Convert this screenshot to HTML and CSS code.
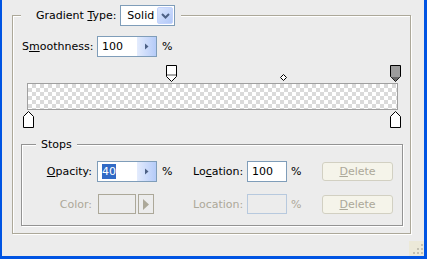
FILE: index.html
```html
<!DOCTYPE html>
<html lang="en">
  <head>
    <meta charset="UTF-8" />
    <title>Gradient Editor</title>
    <link rel="stylesheet" href="styles.css">
  </head>
  <body>
    <div class="window">

      <fieldset class="group gradient-group">
        <legend class="group-title">
          <span>Gradient <u>T</u>ype:</span>
          <span class="select">
            <span class="select-value">Solid</span>
            <span class="select-btn">
              <svg width="9" height="6" viewBox="0 0 9 6"><path d="M1 1 L4.5 4.5 L8 1" fill="none" stroke="#4d6185" stroke-width="2"/></svg>
            </span>
          </span>
        </legend>

        <!-- Smoothness -->
        <div class="smooth-row">
          <span class="label">S<u>m</u>oothness:</span>
          <span class="spin">
            <span class="spin-value">100</span>
            <span class="spin-btn">
              <svg width="4" height="7" viewBox="0 0 4 7"><path d="M0 0.5 L3.5 3.5 L0 6.5 Z" fill="#4d6185"/></svg>
            </span>
          </span>
          <span class="unit">%</span>
        </div>

        <!-- Gradient bar with stops -->
        <div class="gradient-editor">
          <span class="stop stop-top" style="--loc: 0.39">
            <svg width="11" height="17" viewBox="0 0 11 17"><path d="M0.5 0.5 H10.5 V11.5 L5.5 16.5 L0.5 11.5 Z" fill="#fff" stroke="#000"/><rect x="1" y="9" width="9" height="2" fill="#a8a8a8"/></svg>
          </span>
          <span class="stop stop-mid" style="--loc: 0.695">
            <svg width="7" height="7" viewBox="0 0 7 7"><path d="M3.5 0.5 L6.5 3.5 L3.5 6.5 L0.5 3.5 Z" fill="#fff" stroke="#000"/></svg>
          </span>
          <span class="stop stop-top" style="--loc: 1">
            <svg width="11" height="17" viewBox="0 0 11 17"><path d="M0.5 0.5 H10.5 V11.5 L5.5 16.5 L0.5 11.5 Z" fill="#9c9c9c" stroke="#000"/><path d="M1 12 H10 L5.5 16 Z" fill="#666"/></svg>
          </span>

          <div class="gradient-bar"></div>

          <span class="stop stop-bottom" style="--loc: 0">
            <svg width="11" height="17" viewBox="0 0 11 17"><path d="M5.5 0.5 L10.5 5.5 V16.5 H0.5 V5.5 Z" fill="#fff" stroke="#000"/></svg>
          </span>
          <span class="stop stop-bottom" style="--loc: 1">
            <svg width="11" height="17" viewBox="0 0 11 17"><path d="M5.5 0.5 L10.5 5.5 V16.5 H0.5 V5.5 Z" fill="#fff" stroke="#000"/></svg>
          </span>
        </div>

        <!-- Stops -->
        <fieldset class="group stops-group">
          <legend>Stops</legend>
          <div class="stops-grid">
            <span class="label"><u>O</u>pacity:</span>
            <span class="spin">
              <span class="spin-value"><span class="selected">40</span></span>
              <span class="spin-btn">
                <svg width="4" height="7" viewBox="0 0 4 7"><path d="M0 0.5 L3.5 3.5 L0 6.5 Z" fill="#4d6185"/></svg>
              </span>
            </span>
            <span class="unit">%</span>
            <span>Lo<u>c</u>ation:</span>
            <span class="input">100</span>
            <span class="unit-sm">%</span>
            <span class="button disabled"><u>D</u>elete</span>

            <span class="label disabled">Color:</span>
            <span class="color-pick">
              <span class="swatch"></span>
              <span class="swatch-btn">
                <svg width="6" height="11" viewBox="0 0 6 11"><path d="M0 0 L6 5.5 L0 11 Z" fill="#aca899"/></svg>
              </span>
            </span>
            <span class="unit"></span>
            <span class="disabled">Location:</span>
            <span class="input input-off"></span>
            <span class="unit-sm disabled">%</span>
            <span class="button disabled"><u>D</u>elete</span>
          </div>
        </fieldset>
      </fieldset>

      <div class="status-bar">
        <span class="grip">
          <svg width="15" height="15" viewBox="0 0 15 15">
            <rect x="12" y="3" width="2" height="2" fill="#c4c1b2"/>
            <rect x="8" y="7" width="2" height="2" fill="#c4c1b2"/>
            <rect x="12" y="7" width="2" height="2" fill="#c4c1b2"/>
            <rect x="4" y="11" width="2" height="2" fill="#c4c1b2"/>
            <rect x="8" y="11" width="2" height="2" fill="#c4c1b2"/>
            <rect x="12" y="11" width="2" height="2" fill="#c4c1b2"/>
          </svg>
        </span>
      </div>

    </div>
  </body>
</html>
```

FILE: styles.css
```css
:root {
  --bg: #ececec;
  --xp-blue: #0054e3;
  --field-border: #7f9db9;
  --disabled: #aca899;
}

* {
  box-sizing: border-box;
}

body {
  margin: 0;
  background: var(--bg);
  font-family: "DejaVu Sans", sans-serif;
  font-size: 11px;
  color: #000;
}

u {
  text-decoration: underline;
}

.window {
  width: 427px;
  height: 259px;
  border-left: 2px solid var(--xp-blue);
  border-right: 3px solid var(--xp-blue);
  border-bottom: 3px solid var(--xp-blue);
  padding: 5px 0 0 10px;
  display: flex;
  flex-direction: column;
}

/* group boxes */
.group {
  margin: 0;
  padding: 0;
  min-width: 0;
  border: 1px solid #aca899;
  box-shadow: inset 1px 1px 0 #fff, 1px 1px 0 #fff;
}

.group > legend {
  background: var(--bg);
}

.gradient-group {
  width: 399px;
}

.group-title {
  margin-left: 8px;
  padding: 0 6px 0 15px;
  display: flex;
  align-items: center;
  gap: 4px;
}

.select {
  width: 55px;
  height: 21px;
  border: 1px solid var(--field-border);
  background: #fff;
  display: flex;
  align-items: center;
}

.select-value {
  flex: 1;
  padding-left: 6px;
}

.select-btn {
  width: 16px;
  height: 17px;
  margin-right: 1px;
  border: 1px solid #c3d3fd;
  border-radius: 2px;
  background: linear-gradient(135deg, #dbe6fd, #b2c8f8);
  display: flex;
  align-items: center;
  justify-content: center;
}

/* spin fields */
.smooth-row {
  margin-top: 10px;
  padding-left: 9px;
  display: flex;
  align-items: center;
}

.smooth-row .label {
  width: 75px;
}

.spin {
  width: 60px;
  height: 21px;
  border: 1px solid var(--field-border);
  background: #fff;
  display: flex;
  align-items: center;
}

.spin-value {
  flex: 1;
  padding-left: 4px;
}

.spin-btn {
  width: 19px;
  height: 19px;
  background: linear-gradient(90deg, #e4ecfd, #b5cbf8);
  display: flex;
  align-items: center;
  justify-content: center;
}

.selected {
  background: #316ac5;
  color: #fff;
  padding: 1px 0;
}

.unit {
  padding-left: 5px;
}

.unit-sm {
  padding-left: 4px;
}

/* gradient bar */
.gradient-editor {
  position: relative;
  margin: 8px 0 0 14px;
  width: 371px;
  height: 63px;
  padding-top: 18px;
}

.gradient-bar {
  height: 27px;
  border: 1px solid #a0a0a0;
  background: conic-gradient(#dadada 25%, #fff 0 50%, #dadada 0 75%, #fff 0) 0 0 / 8px 8px;
}

.stop {
  position: absolute;
  width: 11px;
  height: 17px;
  left: calc(var(--loc) * 367px - 4px);
  display: flex;
  justify-content: center;
}

.stop-top {
  top: 0;
}

.stop-mid {
  top: 9px;
  height: 7px;
}

.stop-bottom {
  top: 46px;
}

/* stops group */
.stops-group {
  margin: 10px 0 7px 8px;
  width: 382px;
  border-color: #939393;
}

.stops-group > legend {
  margin-left: 14px;
  padding: 0 5px;
  line-height: 13px;
}

.stops-grid {
  padding: 10px 0 11px;
  display: grid;
  grid-template-columns: 75px 60px 36px 54px 40px 35px 71px;
  row-gap: 12px;
  align-items: center;
}

.stops-grid .label {
  justify-self: end;
  padding-right: 5px;
}

.disabled {
  color: var(--disabled);
}

.input {
  height: 21px;
  border: 1px solid var(--field-border);
  background: #fff;
  padding-left: 4px;
  line-height: 19px;
}

.input-off {
  height: 20px;
  border-color: #b7c9de;
  background: transparent;
}

.color-pick {
  display: flex;
  gap: 2px;
  padding-left: 1px;
}

.swatch {
  width: 38px;
  height: 20px;
  border: 1px solid var(--disabled);
}

.swatch-btn {
  width: 16px;
  height: 20px;
  border: 1px solid var(--disabled);
  display: flex;
  align-items: center;
  justify-content: center;
}

.button {
  height: 19px;
  border: 1px solid #d2d0c2;
  border-radius: 3px;
  background: #f5f4ea;
  display: flex;
  align-items: center;
  justify-content: center;
}

/* size grip */
.status-bar {
  margin-top: auto;
  display: flex;
  justify-content: flex-end;
}

.grip {
  width: 15px;
  height: 15px;
  background: #ece9d8;
  display: flex;
}
```
